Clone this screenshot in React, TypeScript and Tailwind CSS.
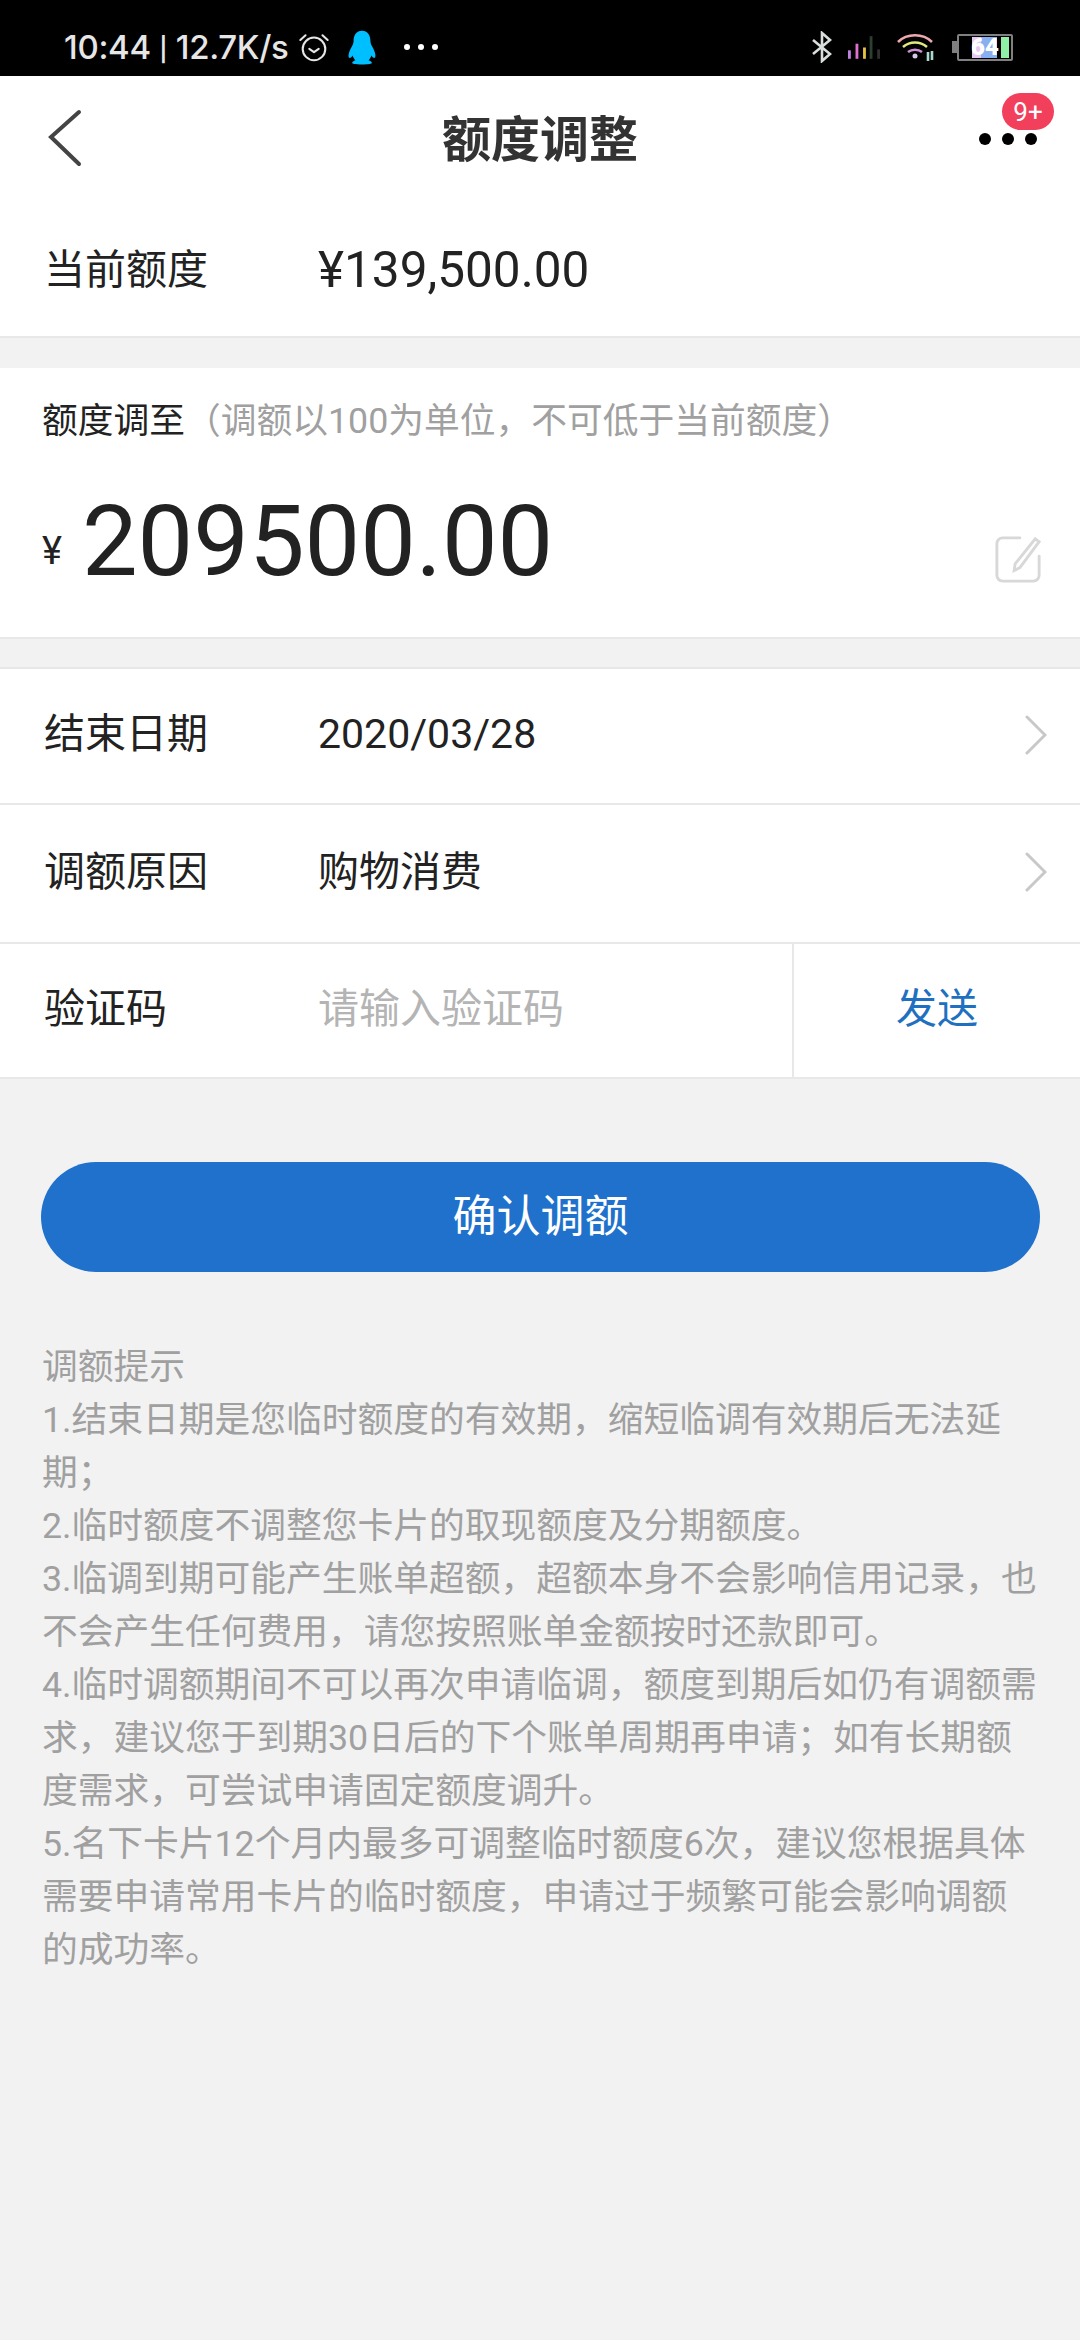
import React from 'react';

const cjk = "font-['Roboto','Noto_Sans_CJK_SC',sans-serif]";

const StatusBar = () => (
  <div className="flex h-[76px] items-center bg-black pt-[18px]">
    <span className="ml-[64px] font-['Inter',sans-serif] text-[33px] leading-none font-medium tracking-[-0.3px] text-[#e6e6e6]">
      10:44 <span className="font-['Roboto',sans-serif]">|</span> 12.7K/s
    </span>
    <svg className="ml-[9px] shrink-0" width="32" height="32" viewBox="0 0 34 34" fill="none" stroke="#e6e6e6" strokeWidth="2.2">
      <circle cx="17" cy="19" r="12" />
      <path d="M12 19l5 3.5 5-3.5" strokeLinecap="round" strokeLinejoin="round" />
      <path d="M2.5 9.5 8 4.5M31.5 9.5 26 4.5" strokeLinecap="round" />
    </svg>
    <svg className="ml-[17px] shrink-0" width="30" height="35" viewBox="0 0 32 36" fill="#00bfff">
      <path d="M16 0c6 0 9 5 9 11 0 3 1 4 3 8 2.5 5 3 9 1.5 10-1 .6-2.5-1-3.5-2.5-.5 2-1.5 3.5-3 5 2 .7 3.5 1.5 3.5 3 0 1-3 1.5-10.5 1.5S5.5 35.5 5.5 34.5c0-1.5 1.5-2.3 3.5-3-1.5-1.5-2.5-3-3-5C5 28 3.5 29.6 2.5 29 1 28 1.5 24 4 19c2-4 3-5 3-8C7 5 10 0 16 0z" />
    </svg>
    <div className="ml-[27px] flex gap-[8px]">
      <span className="h-[6px] w-[6px] rounded-full bg-white" />
      <span className="h-[6px] w-[6px] rounded-full bg-white" />
      <span className="h-[6px] w-[6px] rounded-full bg-white" />
    </div>
    <div className="ml-auto mr-[67px] flex items-center">
      <svg width="20" height="32" viewBox="0 0 20 32" fill="none" stroke="#d8dedc" strokeWidth="2.6">
        <path d="M1 9l17 14-8 7V2l8 7L1 23" />
      </svg>
      <svg className="ml-[16px]" width="32" height="23" viewBox="0 0 34 24">
        <rect x="0" y="15" width="3" height="9" fill="#c080e0" />
        <rect x="8" y="8" width="3" height="16" fill="#e070d0" />
        <rect x="16" y="12" width="3" height="12" fill="#e8c040" />
        <rect x="23" y="0" width="3" height="24" fill="#2c4030" />
        <rect x="31" y="14" width="3" height="10" fill="#303030" />
      </svg>
      <svg className="ml-[17px]" width="38" height="28" viewBox="0 0 38 28" fill="none" strokeWidth="2.6">
        <path d="M1 9C10 0 26 0 35 9" stroke="#f0a8b0" />
        <path d="M6 14c7-6 17-6 24 0" stroke="#e0e880" />
        <path d="M11 19c4-3 10-3 14 0" stroke="#d090d8" />
        <circle cx="18" cy="23" r="2.5" fill="#d8c8e8" stroke="none" />
        <path d="M31 19v9M35 18v9" stroke="#a8d8d0" />
      </svg>
      <div className="ml-[17px] h-[12px] w-[5px] bg-[#808080]" />
      <div className="relative flex h-[27px] w-[56px] items-center justify-end rounded-[2px] border-2 border-[#808080] pr-[2px]">
        <div className="flex h-[21px]">
          <span className="w-[9px] bg-[#e8c8f0]" />
          <span className="w-[16px] bg-[#88b0f0]" />
          <span className="w-[4px] bg-black" />
          <span className="w-[8px] bg-[#90f0a8]" />
        </div>
        <span className="absolute left-[12px] top-[-2px] font-['Roboto',sans-serif] text-[24px] leading-[27px] font-black text-white">64</span>
      </div>
    </div>
  </div>
);

const Header = () => (
  <div className="relative flex h-[126px] items-center justify-center pt-[2px]">
    <svg className="absolute left-[46px] top-[33px]" width="36" height="58" viewBox="0 0 36 58" fill="none" stroke="#444444" strokeWidth="4" strokeLinecap="round">
      <path d="M33 3 5 28l28 27" />
    </svg>
    <h1 className="text-[49px] leading-none font-bold text-[#333333]">额度调整</h1>
    <div className="absolute left-[979px] top-[57px] flex gap-[11px]">
      <span className="h-[12px] w-[12px] rounded-full bg-black" />
      <span className="h-[12px] w-[12px] rounded-full bg-black" />
      <span className="h-[12px] w-[12px] rounded-full bg-black" />
    </div>
    <div className="absolute left-[1002px] top-[17px] flex h-[37px] w-[52px] items-center justify-center rounded-full bg-[#f2405c] text-[26px] leading-none text-white">9+</div>
  </div>
);

const Chevron = () => (
  <svg className="mr-[33px] shrink-0" width="22" height="40" viewBox="0 0 22 40" fill="none" stroke="#c8c8c8" strokeWidth="3" strokeLinecap="round">
    <path d="M2 2l18 18L2 38" />
  </svg>
);

// full-width punctuation written as escapes
const tips = [
  '调额提示',
  '1.结束日期是您临时额度的有效期\uFF0C缩短临调有效期后无法延期\uFF1B',
  '2.临时额度不调整您卡片的取现额度及分期额度\u3002',
  '3.临调到期可能产生账单超额\uFF0C超额本身不会影响信用记录\uFF0C也不会产生任何费用\uFF0C请您按照账单金额按时还款即可\u3002',
  '4.临时调额期间不可以再次申请临调\uFF0C额度到期后如仍有调额需求\uFF0C建议您于到期30日后的下个账单周期再申请\uFF1B如有长期额度需求\uFF0C可尝试申请固定额度调升\u3002',
  '5.名下卡片12个月内最多可调整临时额度6次\uFF0C建议您根据具体需要申请常用卡片的临时额度\uFF0C申请过于频繁可能会影响调额的成功率\u3002',
];

const App: React.FC = () => {
  return (
    <div className={`h-[2340px] w-[1080px] overflow-hidden bg-[#f2f2f2] ${cjk}`}>
      <StatusBar />
      <div className="border-b-2 border-[#e8e8e8] bg-white">
        <Header />
        <div className="flex h-[134px] items-center pt-[3px] pl-[44px]">
          <span className="w-[274px] text-[41px] leading-none text-[#222222]">当前额度</span>
          <span className="text-[49.5px] leading-none text-[#222222]">¥139,500.00</span>
        </div>
      </div>

      <div className="mt-[30px] h-[271px] border-b-2 border-[#e8e8e8] bg-white pt-[31px] pl-[42px]">
        <p className="text-[35.75px] leading-[44px] text-[#222222]">
          额度调至<span className="text-[#a0a0a0]">{'\uFF08调额以100为单位\uFF0C不可低于当前额度\uFF09'}</span>
        </p>
        <div className="mt-[39px] flex items-center">
          <span className="mt-[20px] text-[38px] leading-none text-[#222222]">¥</span>
          <span className="ml-[20px] text-[99px] leading-[118px] text-[#222222]">209500.00</span>
          <svg className="mr-[38px] ml-auto mt-[36px]" width="48" height="48" viewBox="0 0 48 50" fill="none" stroke="#d8d8d8" strokeWidth="3" strokeLinecap="round">
            <path d="M26 3H8a6 6 0 0 0-6 6v33a6 6 0 0 0 6 6h32a6 6 0 0 0 6-6V22" />
            <path d="M42 4l4 3-20 27-6 3 1-7z" />
          </svg>
        </div>
      </div>

      <div className="mt-[28px] border-t-2 border-[#e8e8e8]">
        <div className="flex h-[136px] items-center border-b-2 border-[#e8e8e8] bg-white pb-[3px] pl-[44px]">
          <span className="w-[274px] text-[41px] leading-none text-[#222222]">结束日期</span>
          <span className="flex-1 text-[41px] leading-none text-[#222222]">2020/03/28</span>
          <Chevron />
        </div>
        <div className="flex h-[139px] items-center border-b-2 border-[#e8e8e8] bg-white pb-[3px] pl-[44px]">
          <span className="w-[274px] text-[41px] leading-none text-[#222222]">调额原因</span>
          <span className="flex-1 text-[41px] leading-none text-[#222222]">购物消费</span>
          <Chevron />
        </div>
        <div className="flex h-[135px] items-stretch border-b-2 border-[#e8e8e8] bg-white pl-[44px]">
          <span className="w-[274px] self-center pb-[2px] text-[41px] leading-none text-[#222222]">验证码</span>
          <span className="flex-1 self-center pb-[2px] text-[41px] leading-none text-[#b4b4b4]">请输入验证码</span>
          <div className="flex w-[288px] items-center justify-center border-l-2 border-[#e8e8e8] pb-[2px] text-[41px] leading-none text-[#2070c0]">发送</div>
        </div>
      </div>

      <button className="mx-[41px] mt-[83px] block h-[110px] w-[999px] rounded-full bg-[#1f71cc] text-[44px] leading-none text-white">确认调额</button>

      <div className="mt-[69px] px-[42px] text-[35.75px] leading-[53px] text-[#a0a0a0]">
        {tips.map(t => (
          <p key={t}>{t}</p>
        ))}
      </div>
    </div>
  );
};

export default App;
